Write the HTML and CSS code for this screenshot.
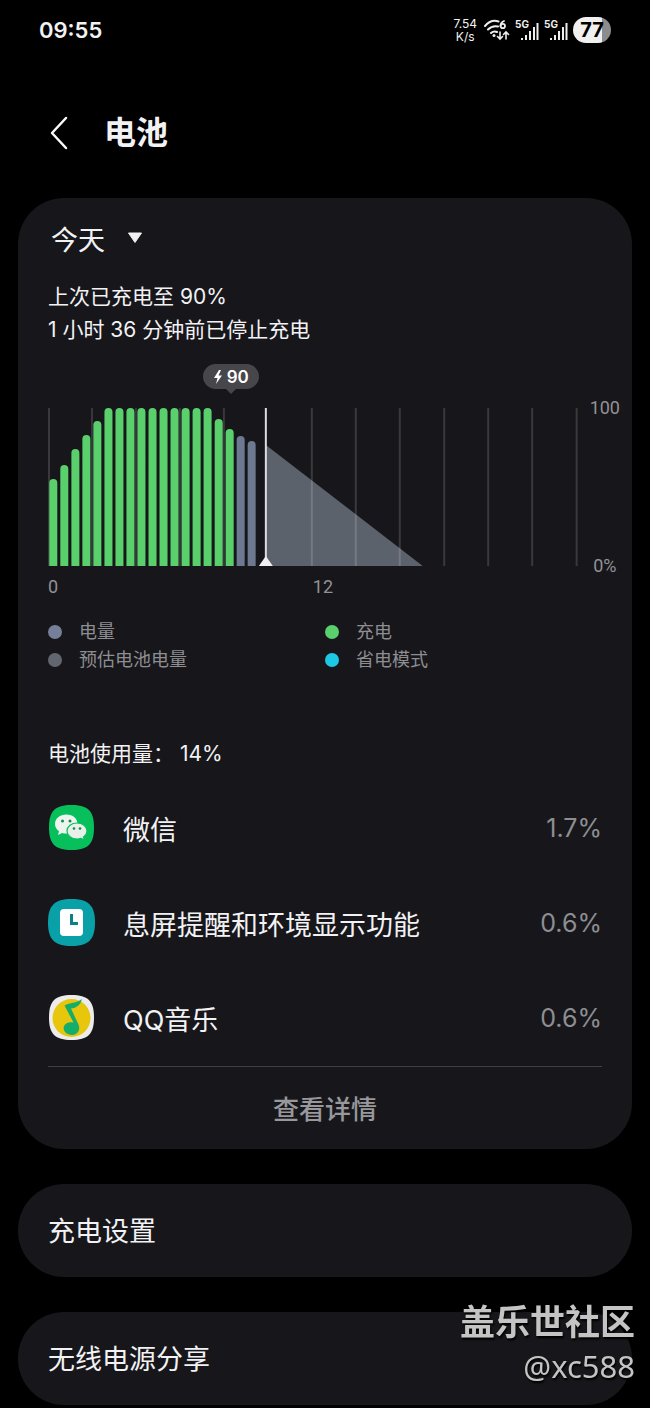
FILE: index.html
```html
<!DOCTYPE html>
<html lang="zh-CN">
<head>
    <meta charset="UTF-8">
    <meta name="viewport" content="width=device-width, initial-scale=1.0">
    <title>电池</title>
    <link rel="stylesheet" href="styles.css">
</head>
<body>
    <div class="status-bar">
        <span class="clock">09:55</span>
        <div class="status-icons">
            <span class="net-speed">7.54<br>K/s</span>
            <svg class="wifi" width="26" height="22" viewBox="0 0 26 22" fill="none" stroke="#eee" stroke-width="2" stroke-linecap="round">
                <path d="M1 7C5 2.500 10 1 14.500 2.500M4 10.500C7 7.500 10 6.500 14 7.500M7 14C9 12.200 11 12 13 13"/>
                <circle cx="10" cy="16.500" r="1.500" fill="#eee" stroke="none"/>
                <path d="M20 2C17.500 3 16.500 5 16.500 7" stroke-width="1.800"/>
                <circle cx="18.800" cy="7" r="2.200" stroke-width="1.800"/>
                <path d="M16 13V20M13.500 17.500L16 20L18.500 17.500M22 20V13M19.500 15.500L22 13L24.500 15.500" stroke-width="1.600"/>
            </svg>
            <svg class="signal" width="24" height="22" viewBox="0 0 24 22">
                <text class="signal-text" x="0" y="9">5G</text>
                <path d="M7 19V21M11 16V21M15 12V21M19 8V21M22.500 4V21" stroke="#eee" stroke-width="2"/>
            </svg>
            <svg class="signal" width="24" height="22" viewBox="0 0 24 22">
                <text class="signal-text" x="0" y="9">5G</text>
                <path d="M7 19V21M11 16V21M15 12V21M19 8V21M22.500 4V21" stroke="#eee" stroke-width="2"/>
            </svg>
            <span class="battery-pill">77</span>
        </div>
    </div>

    <header class="page-header">
        <button class="back" type="button" aria-label="返回">
            <svg width="20" height="34" viewBox="0 0 20 34" fill="none" stroke="#fafafa" stroke-width="2.500" stroke-linecap="round" stroke-linejoin="round">
                <path d="M17 2L3 17L17 32"/>
            </svg>
        </button>
        <h1>电池</h1>
    </header>

    <main>
        <section class="card usage-card">
            <div class="day-picker">
                <select class="day-select" aria-label="日期">
                    <option>今天</option>
                </select>
                <svg width="16" height="12" viewBox="0 0 16 12"><path d="M1.500 1H14.500L8 10.500Z" fill="#f2f2f2" stroke="#f2f2f2" stroke-linejoin="round"/></svg>
            </div>

            <p class="charge-info">上次已充电至 90%<br>1 小时 36 分钟前已停止充电</p>

            <div class="chart">
                <div class="plot">
                    <span class="bubble">
                        <svg width="10" height="14" viewBox="0 0 10 14"><path d="M6 0L1 8H4.500L3 14L9 5.500H5.500L8 0Z" fill="#fff"/></svg>
                        90
                    </span>
                    <svg class="plot-svg" viewBox="0 0 530 158">
                        <path class="estimate" d="M218 37L375 158H218Z"/>
                        <path class="grid" d="M1 0V158M44 0V158M88 0V158M132 0V158M176 0V158M264 0V158M308 0V158M352 0V158M396.500 0V158M440.500 0V158M484.500 0V158M529 0V158"/>
                        <path class="bars charging" d="M5.300 75V170M16.300 61V170M27.400 45V170M38.400 31V170M49.400 17V170M60.500 4V170M71.500 4V170M82.500 4V170M93.500 4V170M104.600 4V170M115.600 4V170M126.600 4V170M137.700 4V170M148.700 4V170M159.700 4V170M170.800 15V170M181.800 25V170"/>
                        <path class="bars level" d="M192.800 32V170M203.800 37V170"/>
                        <path class="now" d="M218 0V158"/>
                        <path d="M218 148L225 158H211Z" fill="#f0f0f2"/>
                    </svg>
                    <div class="x-axis"><span>0</span><span>12</span></div>
                </div>
                <div class="y-axis"><span>100</span><span>0%</span></div>
            </div>

            <ul class="legend">
                <li><span class="dot dot-level"></span>电量</li>
                <li><span class="dot dot-charging"></span>充电</li>
                <li><span class="dot dot-estimate"></span>预估电池电量</li>
                <li><span class="dot dot-saver"></span>省电模式</li>
            </ul>

            <h2>电池使用量： 14%</h2>

            <ul class="apps">
                <li>
                    <svg width="48" height="48" viewBox="0 0 48 48">
                        <path d="M23.500 1C40 1 46 7 46 23.500S40 46 23.500 46S1 40 1 23.500S7 1 23.500 1Z" fill="#07c05c"/>
                        <path d="M18.500 10.500C12 10.500 7 14.500 7 20C7 23 8.500 25.500 11 27.300L10 31L14 28.900C15.500 29.400 17 29.500 18.500 29.500C25 29.500 29.500 25.500 29.500 20S25 10.500 18.500 10.500Z" fill="#eef5ef"/>
                        <path d="M29 19C34.500 19 39 22.500 39 27C39 29.500 37.500 31.500 35.500 33L36.500 36L33 34.300C31.800 34.800 30.500 35 29 35C23.500 35 19 31.500 19 27S23.500 19 29 19Z" fill="#e8f0e9" stroke="#07c05c" stroke-width="1.200"/>
                        <g fill="#168a4c"><circle cx="14.500" cy="17" r="1.500"/><circle cx="22" cy="17" r="1.500"/><circle cx="26" cy="24.500" r="1.300"/><circle cx="32" cy="24.500" r="1.300"/></g>
                    </svg>
                    <span class="app-name">微信</span>
                    <span class="percent">1.7%</span>
                </li>
                <li>
                    <svg width="48" height="48" viewBox="0 0 48 48">
                        <path d="M23.500 0C40.500 0 47 6.500 47 23.500S40.500 47 23.500 47S0 40.500 0 23.500S6.500 0 23.500 0Z" fill="#0aa0a8"/>
                        <rect x="12" y="10" width="23" height="27" rx="4" fill="#fff"/>
                        <path d="M23.500 15V24.500H30" fill="none" stroke="#0b8087" stroke-width="3"/>
                    </svg>
                    <span class="app-name">息屏提醒和环境显示功能</span>
                    <span class="percent">0.6%</span>
                </li>
                <li>
                    <svg width="48" height="48" viewBox="0 0 48 48">
                        <path d="M23.500 1C40 1 46 7 46 23.500S40 46 23.500 46S1 40 1 23.500S7 1 23.500 1Z" fill="#ececec"/>
                        <circle cx="23.500" cy="24" r="19" fill="#e8c60c"/>
                        <path d="M16.500 11.500C22 8.500 28 9.500 34 5C32.500 11 28.500 14 23 14.500L30 29.500C33.500 36 29 41.500 23 41C17.500 40.500 14.500 36 16 32C17.500 28.500 21.500 27.500 25.500 28.500Z" fill="#16ad6b"/>
                    </svg>
                    <span class="app-name">QQ音乐</span>
                    <span class="percent">0.6%</span>
                </li>
            </ul>

            <button class="details" type="button">查看详情</button>
        </section>

        <a class="card setting" href="#charging">充电设置</a>
        <a class="card setting" href="#share">无线电源分享</a>
    </main>

    <div class="watermark">
        <strong>盖乐世社区</strong>
        <span>@xc588</span>
    </div>
</body>
</html>
```
FILE: styles.css
```css
* {
    box-sizing: border-box;
}
body {
    margin: 0;
    background-color: #000;
    color: #f2f2f4;
    font-family: Inter, "Noto Sans CJK SC", sans-serif;
}
h1, h2, p, ul {
    margin: 0;
    padding: 0;
}
ul {
    list-style: none;
}
svg {
    display: block;
    flex: none;
}
button {
    border: none;
    background: none;
    color: inherit;
    font-family: inherit;
    cursor: pointer;
}

/* status bar */
.status-bar {
    display: flex;
    justify-content: space-between;
    align-items: center;
    height: 60px;
    padding: 0 39px;
}
.clock {
    font-size: 22px;
    font-weight: 600;
}
.status-icons {
    display: flex;
    align-items: center;
    gap: 5px;
}
.net-speed {
    margin-right: 2px;
    font-size: 12px;
    line-height: 13px;
    text-align: center;
}
.signal-text {
    fill: #eee;
    font-size: 10px;
    font-weight: 700;
}
.battery-pill {
    width: 38px;
    height: 26px;
    border-radius: 13px;
    background: linear-gradient(90deg, #f0f0f0 77%, #8c8c8c 77%);
    color: #000;
    font-size: 20px;
    font-weight: 700;
    line-height: 26px;
    text-align: center;
}

/* header */
.page-header {
    display: flex;
    align-items: center;
    gap: 35px;
    padding: 53px 49px 45px;
}
.page-header .back {
    padding: 0;
}
.page-header h1 {
    font-size: 32px;
    font-weight: 700;
    line-height: 40px;
}

/* cards */
main {
    display: flex;
    flex-direction: column;
    gap: 35px;
    padding: 0 18px 3px;
}
.card {
    border-radius: 46px;
    background-color: #17171b;
}
.usage-card {
    padding: 22px 30px 0;
}
.day-picker {
    display: flex;
    align-items: center;
    gap: 22px;
    padding-left: 3px;
}
.day-select {
    height: 40px;
    padding: 0;
    border: none;
    background: none;
    appearance: none;
    color: inherit;
    font-family: inherit;
    font-size: 27px;
}
.day-picker svg {
    margin-bottom: 4px;
}
.charge-info {
    margin-top: 20px;
    font-size: 21px;
    line-height: 33px;
}

/* chart */
.chart {
    display: flex;
    gap: 12px;
    margin: 62px -18px 0 0;
    color: #929296;
    font-family: Roboto, sans-serif;
    font-size: 18px;
}
.plot {
    position: relative;
    flex: 1;
}
.plot-svg {
    width: 100%;
    height: auto;
}
.grid {
    stroke: #fff;
    stroke-opacity: 0.15;
    stroke-width: 2;
}
.bars {
    stroke-width: 8;
    stroke-linecap: round;
}
.charging {
    stroke: #5ad06c;
}
.level {
    stroke: #6d7990;
}
.estimate {
    fill: #5c626b;
}
.now {
    stroke: #dcdce0;
    stroke-width: 2;
}
.bubble {
    position: absolute;
    top: -44px;
    left: 34.5%;
    display: flex;
    align-items: center;
    justify-content: center;
    gap: 4px;
    width: 56px;
    height: 25px;
    border-radius: 13px;
    background-color: #46464b;
    color: #fff;
    font-family: Inter, sans-serif;
    font-size: 17px;
    font-weight: 600;
    transform: translateX(-50%);
}
.bubble::after {
    content: "";
    position: absolute;
    top: 100%;
    border: 5px solid transparent;
    border-top-color: #46464b;
    border-bottom: none;
}
.x-axis {
    display: grid;
    grid-template-columns: 1fr 1fr;
    margin-top: 10px;
    line-height: 22px;
}
.y-axis {
    display: flex;
    flex-direction: column;
    justify-content: space-between;
    align-items: center;
    margin: -11px 0 21px;
    line-height: 22px;
}

.legend {
    display: grid;
    grid-template-columns: 1fr 1fr;
    margin-top: 20px;
    color: #8e8e92;
    font-size: 18px;
    line-height: 28px;
}
.legend li {
    display: flex;
    align-items: center;
    gap: 17px;
}
.dot {
    width: 14px;
    height: 14px;
    border-radius: 50%;
}
.dot-level {
    background-color: #757f99;
}
.dot-charging {
    background-color: #5ad06c;
}
.dot-estimate {
    background-color: #62666e;
}
.dot-saver {
    background-color: #1cc8e4;
}

/* usage list */
h2 {
    margin-top: 64px;
    font-size: 21px;
    font-weight: 400;
    line-height: 32px;
}
.apps {
    margin-top: 11px;
    border-bottom: 1px solid #404044;
}
.apps li {
    display: flex;
    align-items: center;
    gap: 27px;
    height: 95px;
}
.app-name {
    flex: 1;
    font-size: 27px;
}
.percent {
    color: #8e8e92;
    font-size: 25px;
}
.details {
    display: block;
    width: 100%;
    height: 82px;
    padding: 0;
    color: #98989c;
    font-size: 26px;
    font-weight: 500;
}
.setting {
    padding: 2px 30px 0;
    color: inherit;
    font-size: 27px;
    line-height: 91px;
    text-decoration: none;
}

.watermark {
    position: fixed;
    right: 15px;
    bottom: 20px;
    display: flex;
    flex-direction: column;
    align-items: flex-end;
    color: #c4c4c4;
    font-family: "Noto Sans", "Noto Sans CJK SC", sans-serif;
    font-size: 31px;
    line-height: 44px;
    text-shadow: 1px 2px 2px #000;
}
.watermark strong {
    font-size: 35px;
}
```
